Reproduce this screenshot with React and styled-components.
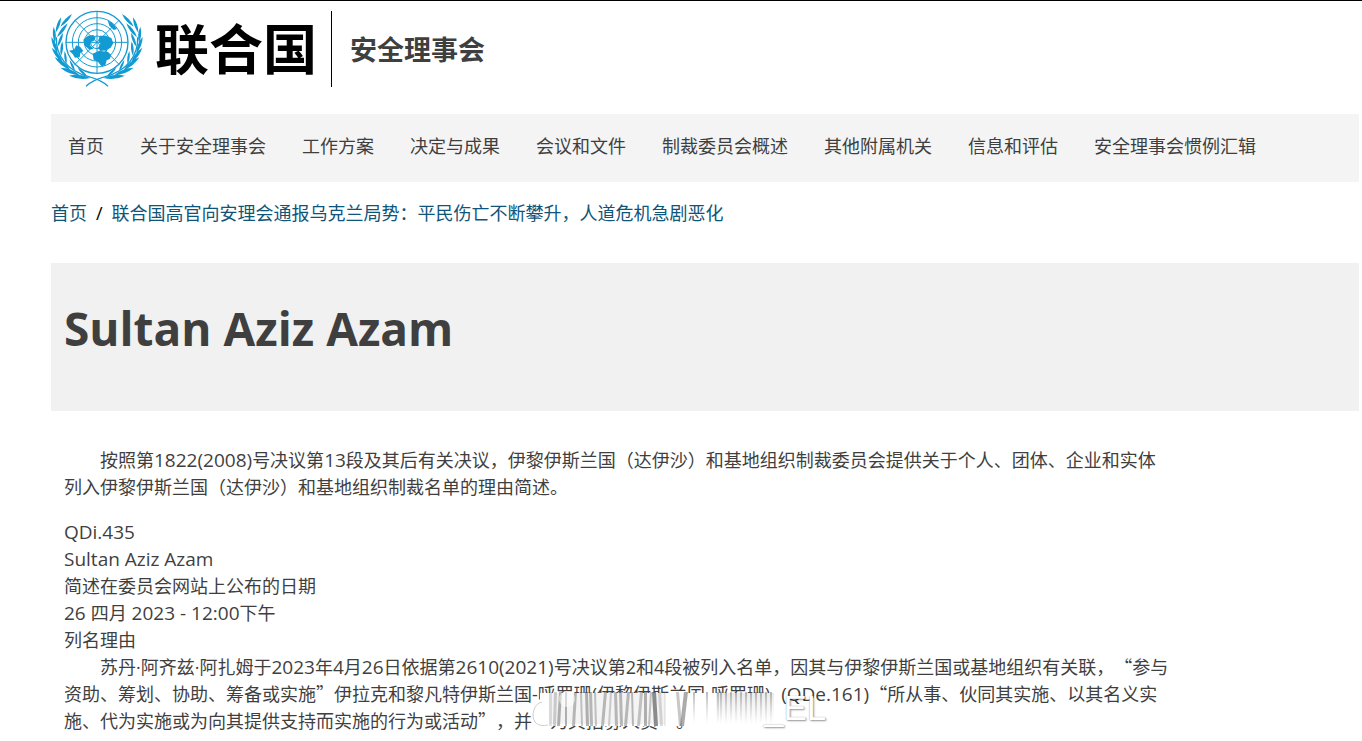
import styled, { createGlobalStyle } from 'styled-components';

const GlobalStyle = createGlobalStyle`
  * {
    box-sizing: border-box;
  }

  body {
    margin: 0;
    background: #fff;
    color: #3f3f3f;
    font-family: 'Open Sans', 'Noto Sans CJK SC', sans-serif;
    font-size: 18px;
    font-weight: 400;
    line-height: 27px;
    text-spacing-trim: space-all;
  }
`;

const Page = styled.div`
  border-top: 1px solid #000;
  padding: 10px 3px 0 51px;
`;

const Header = styled.header`
  display: flex;
  align-items: center;
  height: 76px;
`;

const Brand = styled.a`
  display: flex;
  align-items: center;
  gap: 11px;
  height: 76px;
  padding-right: 14px;
  border-right: 1px solid #000;
  color: #000;
  font-size: 54px;
  font-weight: 700;
  line-height: 72px;
  text-decoration: none;
`;

const SiteName = styled.a`
  margin-left: 18px;
  color: #3f3f3f;
  font-size: 27px;
  font-weight: 700;
  text-decoration: none;
`;

const Nav = styled.nav`
  display: flex;
  flex-wrap: wrap;
  gap: 36px;
  margin-top: 27px;
  padding: 19px 17px 22px;
  background: #f4f4f4;

  a {
    color: #3f3f3f;
    text-decoration: none;
  }
`;

const Breadcrumb = styled.nav`
  display: flex;
  gap: 9px;
  margin-top: 18px;
  color: #000;

  a {
    color: #0f5578;
    text-decoration: none;
  }
`;

const Banner = styled.div`
  margin-top: 36px;
  padding: 31px 13px 49px;
  background: #f1f1f1;

  h1 {
    margin: 0;
    font-size: 46px;
    font-weight: 700;
    line-height: 68px;
  }
`;

const Article = styled.main`
  padding: 36px 13px 0;
`;

const Paragraph = styled.p`
  margin: 0 0 ${(props) => props.$gap || 0}px;
  text-indent: ${(props) => (props.$indent ? '2em' : 0)};
`;

const Latin = styled.span`
  font-size: 19px;
  line-height: 1;
`;

const Quote = styled.span`
  font-family: 'Noto Sans CJK SC', sans-serif;
  line-height: 1;
`;

const Covered = styled.span`
  position: relative;
  padding-right: 6px;
`;

const SmearSvg = styled.svg`
  position: absolute;
  top: 8px;
  left: 0;
  width: 243px;
  height: 38px;
  z-index: 1;
`;

const Mark = styled.span`
  position: absolute;
  top: 6px;
  left: 232px;
  z-index: 2;
  color: #fff;
  font-family: 'Liberation Sans', sans-serif;
  font-size: 35px;
  line-height: 40px;
  text-indent: 0;
  text-shadow: 1px 1px 2px rgba(0, 0, 0, 0.4), 0 0 1px rgba(0, 0, 0, 0.35);
`;

const EmblemSvg = styled.svg`
  display: block;
  width: 93px;
  height: 78px;
`;

// tip x, tip y, base x, base y
const leaves = [
  [95, 42, 60, 80], [62, 52, 46, 98],
  [82, 70, 50, 112], [40, 80, 44, 128],
  [68, 98, 52, 140], [33, 110, 52, 160],
  [66, 124, 62, 168], [34, 143, 68, 188],
  [73, 153, 78, 192], [43, 172, 90, 210],
  [88, 180, 104, 214], [60, 203, 118, 225],
  [112, 203, 140, 229], [86, 227, 150, 234],
];

const leafPath = ([tx, ty, bx, by]) => {
  const mx = (tx + bx) / 2;
  const my = (ty + by) / 2;
  const nx = (by - ty) * 0.18;
  const ny = (tx - bx) * 0.18;
  return `M${tx} ${ty}Q${mx + nx} ${my + ny} ${bx} ${by}Q${mx - nx} ${my - ny} ${tx} ${ty}z`;
};

const wreath = leaves.map(leafPath).join('');

const Branch = (props) => (
  <g {...props}>
    <path d={wreath} fill="#129ad3" />
    <path
      d="M48 112C46 165 78 212 145 230C172 237 190 246 203 259"
      fill="none"
      stroke="#129ad3"
      strokeWidth="4"
    />
  </g>
);

const Emblem = () => (
  <EmblemSvg viewBox="32 30 279 234" aria-hidden="true">
    <g fill="none" stroke="#129ad3" strokeWidth="3">
      <circle cx="170" cy="127" r="93" strokeWidth="4" />
      <circle cx="170" cy="127" r="74" />
      <circle cx="170" cy="127" r="56" />
      <circle cx="170" cy="127" r="38" />
      <circle cx="170" cy="127" r="19" />
      <path d="M170 34v186M77 127h186M104 61l132 132M236 61L104 193" />
    </g>
    <g fill="#129ad3">
      <path d="M86 152l15-3 7-13 12 5 9 12-9 6-2 13-14 1-7-11z" />
      <path d="M129 119l14-12 16-2 7 8-5 9-10 4-1 11 10 9-13 3-15-13z" />
      <path d="M178 107l19 0 16 7 6 16-8 13-14 8-17 2-7-10 7-12-6-10z" />
      <path d="M157 161l20-9 26 4 10 9-5 12-9 4-4 15-12 3-10-14-13-6z" />
      <path d="M202 61l17 11 11 15-10 3-13-13z" />
    </g>
    <Branch />
    <Branch transform="matrix(-1 0 0 1 340 0)" />
  </EmblemSvg>
);

// top x, bottom x, width, opacity
const streaks = [
  [17, 17, 3, 0.15], [22, 21, 3, 0.25], [27, 25, 3, 0.4], [33, 33, 2, 0.4], [42, 40, 3, 0.35],
  [48, 49, 2, 0.3], [53, 54, 3, 0.4], [57, 58, 3, 0.35], [62, 63, 2, 0.3], [72, 69, 3, 0.35],
  [78, 76, 2, 0.25], [82, 83, 3, 0.35], [87, 88, 3, 0.35], [95, 92, 3, 0.35], [99, 100, 2, 0.35],
  [108, 105, 3, 0.3], [112, 112, 3, 0.4], [118, 116, 2, 0.3], [120, 122, 4, 0.6], [126, 128, 3, 0.2],
  [132, 132, 2, 0.1], [144, 147, 3, 0.3], [152, 148, 4, 0.45],
];

const fadedStreaks = [161, 174, 185, 188, 193, 198, 203, 208, 213, 218, 223, 228, 233, 238];

const Smear = () => (
  <SmearSvg viewBox="0 0 243 38" aria-hidden="true">
    <defs>
      <linearGradient id="fade" x1="0" y1="0" x2="0" y2="1">
        <stop offset="0" stopColor="#666" stopOpacity="0.45" />
        <stop offset="1" stopColor="#999" stopOpacity="0" />
      </linearGradient>
      <filter id="soft" x="-5%" y="-5%" width="110%" height="110%">
        <feGaussianBlur stdDeviation="0.7 0.3" />
      </filter>
    </defs>
    <path d="M8 3h235v33H8zM0 15h8v21H0z" fill="#fff" />
    <path d="M17 3h116v31H17z" fill="#e9e9e9" opacity="0.5" />
    <path d="M184 3h58v30h-58z" fill="url(#fade)" opacity="0.3" />
    <g filter="url(#soft)">
      {streaks.map(([top, bottom, w, o]) => (
        <path
          key={top}
          d={`M${top} 2h${w}L${bottom + w} 36h-${w}z`}
          fill="#444"
          opacity={o}
        />
      ))}
      {fadedStreaks.map((x) => (
        <rect key={x} x={x} y="2" width="2" height="32" fill="url(#fade)" />
      ))}
      <path d="M10 12C1 14-1 26 3 32C6 36 12 36 16 35" fill="none" stroke="#ccc" />
    </g>
    <circle cx="35" cy="9" r="8" fill="#fff" opacity="0.5" />
  </SmearSvg>
);

const links = [
  '首页',
  '关于安全理事会',
  '工作方案',
  '决定与成果',
  '会议和文件',
  '制裁委员会概述',
  '其他附属机关',
  '信息和评估',
  '安全理事会惯例汇辑',
];

const App = () => (
  <>
    <GlobalStyle />
    <Page>
      <Header>
        <Brand href="#un">
          <Emblem />
          联合国
        </Brand>
        <SiteName href="#sc">安全理事会</SiteName>
      </Header>
      <Nav>
        {links.map((link) => <a key={link} href="#nav">{link}</a>)}
      </Nav>
      <Breadcrumb>
        <a href="#home">首页</a>
        <span>/</span>
        <a href="#news">联合国高官向安理会通报乌克兰局势：平民伤亡不断攀升，人道危机急剧恶化</a>
      </Breadcrumb>
      <Banner>
        <h1>Sultan Aziz Azam</h1>
      </Banner>
      <Article>
        <Paragraph $indent $gap={18}>
          按照第
          <Latin>1822(2008)</Latin>
          号决议第
          <Latin>13</Latin>
          段及其后有关决议，伊黎伊斯兰国（达伊沙）和基地组织制裁委员会提供关于个人、团体、企业和实体
          <br />
          列入伊黎伊斯兰国（达伊沙）和基地组织制裁名单的理由简述。
        </Paragraph>
        <Paragraph><Latin>QDi.435</Latin></Paragraph>
        <Paragraph><Latin>Sultan Aziz Azam</Latin></Paragraph>
        <Paragraph>简述在委员会网站上公布的日期</Paragraph>
        <Paragraph>
          <Latin>{'26 '}</Latin>
          四月
          <Latin>{' 2023 - 12:00'}</Latin>
          下午
        </Paragraph>
        <Paragraph>列名理由</Paragraph>
        <Paragraph $indent>
          苏丹·阿齐兹·阿扎姆于
          <Latin>2023</Latin>
          年
          <Latin>4</Latin>
          月
          <Latin>26</Latin>
          日依据第
          <Latin>2610(2021)</Latin>
          号决议第2和4段被列入名单，因其与伊黎伊斯兰国或基地组织有关联，
          <Quote>“</Quote>
          参与
          <br />
          资助、筹划、协助、筹备或实施
          <Quote>”</Quote>
          伊拉克和黎凡特伊斯兰国
          <Covered>
            -呼罗珊(伊黎伊斯兰国-呼罗珊)
            <Smear />
            <Mark>_EL</Mark>
          </Covered>
          <Latin>{' (QDe.161)'}</Latin>
          <Quote>“</Quote>
          所从事、伙同其实施、以其名义实
          <br />
          施、代为实施或为向其提供支持而实施的行为或活动
          <Quote>”</Quote>
          ，并
          <Quote>“</Quote>
          为其招募人员
          <Quote>”</Quote>
          。
        </Paragraph>
      </Article>
    </Page>
  </>
);

export default App;
